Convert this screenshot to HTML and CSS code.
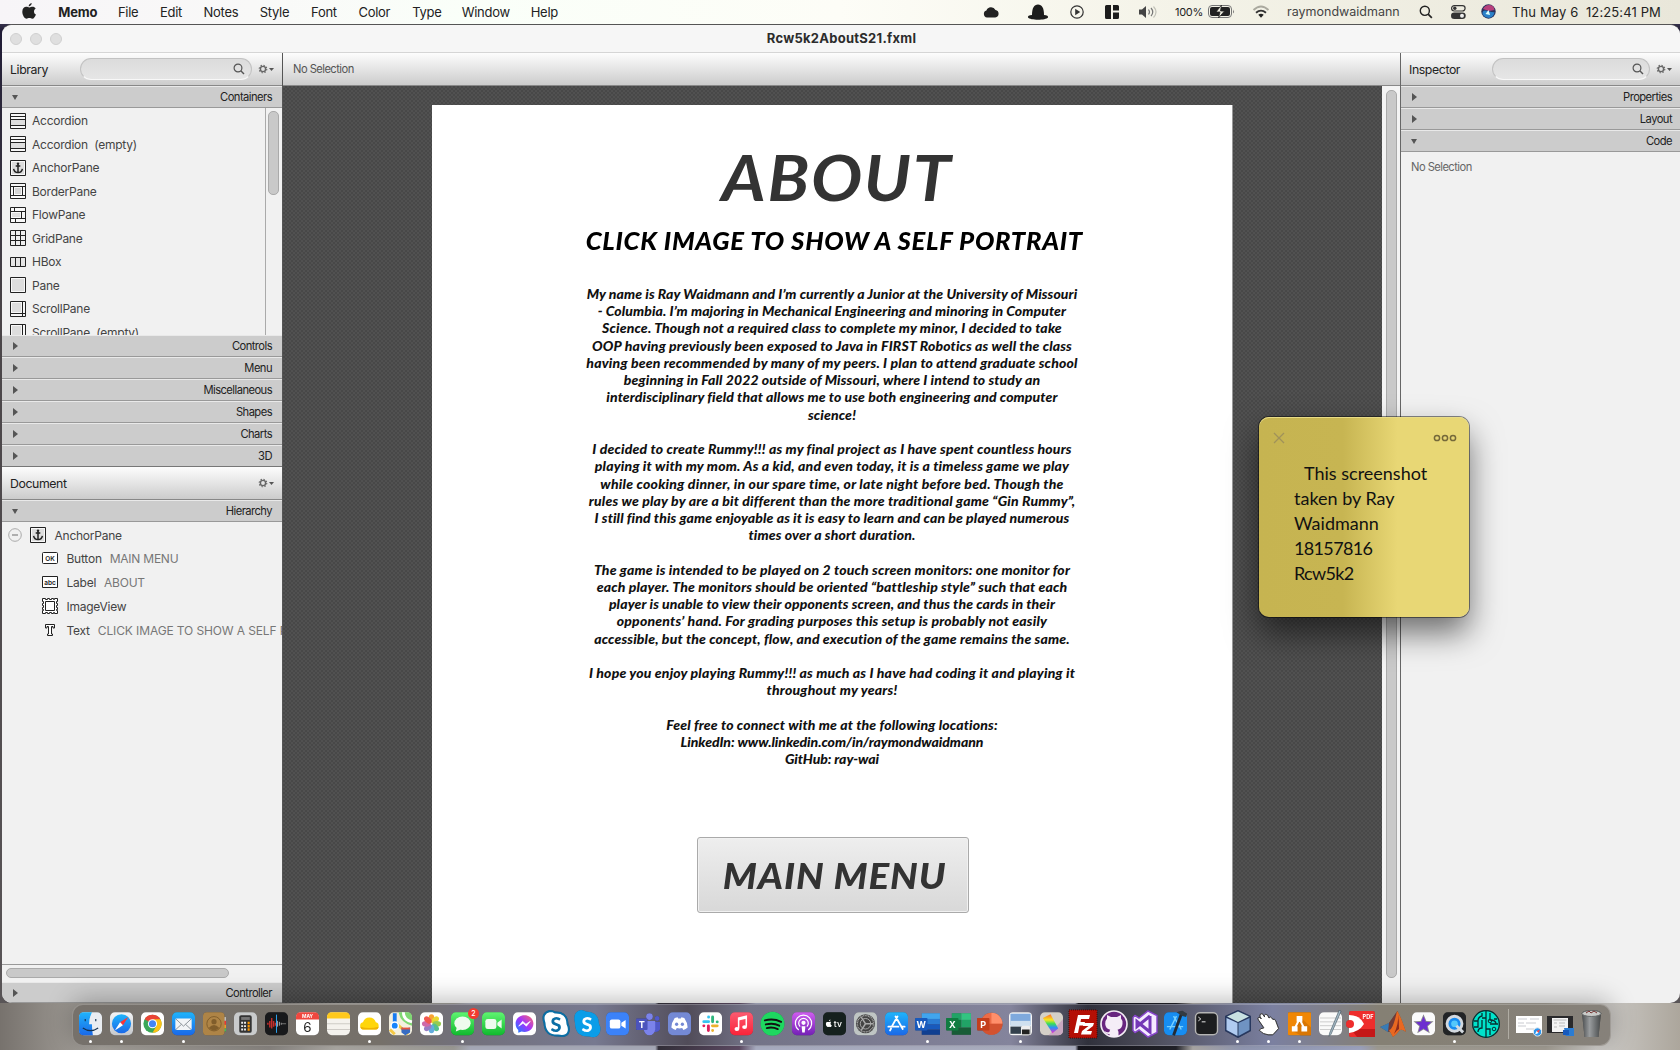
FILE: index.html
```html
<!DOCTYPE html>
<html lang="en">
<head>
<meta charset="utf-8">
<title>Rcw5k2AboutS21.fxml</title>
<link rel="stylesheet" href="styles.css">
</head>
<body>
<svg class="defs" width="0" height="0">
  <defs>
    <linearGradient id="blue" x2="0" y2="1"><stop offset="0" stop-color="#1fb4fb"/><stop offset="1" stop-color="#1a68e8"/></linearGradient>
    <linearGradient id="silver" x2="0" y2="1"><stop offset="0" stop-color="#f4f5f6"/><stop offset="1" stop-color="#c5c8cc"/></linearGradient>
    <linearGradient id="green" x2="0" y2="1"><stop offset="0" stop-color="#5ff571"/><stop offset="1" stop-color="#10b92e"/></linearGradient>
    <linearGradient id="pink" x2="0" y2="1"><stop offset="0" stop-color="#fc5b71"/><stop offset="1" stop-color="#fa2339"/></linearGradient>
    <linearGradient id="purple" x2="0" y2="1"><stop offset="0" stop-color="#cf5df0"/><stop offset="1" stop-color="#7320b5"/></linearGradient>
    <linearGradient id="messenger" x1="1" x2="0" y2="1"><stop offset="0" stop-color="#ff6a68"/><stop offset=".5" stop-color="#a033ff"/><stop offset="1" stop-color="#0a86ff"/></linearGradient>
    <linearGradient id="rainbow" x2="0" y2="1"><stop offset="0" stop-color="#ff6a2a"/><stop offset=".3" stop-color="#f7e71f"/><stop offset=".5" stop-color="#3ade59"/><stop offset=".7" stop-color="#2f8ef8"/><stop offset="1" stop-color="#ef2fc6"/></linearGradient>
    <linearGradient id="trash" x2="1" y2="0"><stop offset="0" stop-color="#4b4e50"/><stop offset=".4" stop-color="#999c9e"/><stop offset="1" stop-color="#454849"/></linearGradient>
  </defs>
  <symbol id="search" viewBox="0 0 12 12"><circle cx="5" cy="5" r="3.900" fill="none" stroke="currentColor" stroke-width="1.200"/><path d="M7.800 7.800 11 11" stroke="currentColor" stroke-width="1.400"/></symbol>
  <symbol id="gear" viewBox="0 0 16 10"><circle cx="5" cy="5" r="2.600" fill="none" stroke="#666" stroke-width="1.400"/><circle cx="5" cy="5" r="3.800" fill="none" stroke="#666" stroke-width="1.100" stroke-dasharray="1.400 1.580"/><path d="M11 4h5l-2.500 3z" fill="#555"/></symbol>
  <symbol id="anchor" viewBox="0 0 16 16"><path d="M.5.5h15v15H.5z" fill="#f8f8f8" stroke="#222"/><path d="M2 2h12v12H2z" fill="#ddd"/><path d="M8 3.200v9.500M5.700 6h4.600M3.600 8.800c.4 2.300 2 3.600 4.400 3.800 2.400-.2 4-1.500 4.400-3.800" fill="none" stroke="#222" stroke-width="1.500"/><circle cx="8" cy="3.600" r="1.200" fill="#222"/></symbol>
  <symbol id="accordion" viewBox="0 0 16 16"><path d="M.5.5h15v15H.5z" fill="#f8f8f8" stroke="#222"/><path d="M1 7h14v5H1z" fill="#ddd"/><path d="M0 3.500h16M0 6.500h16M0 12.500h16" stroke="#222"/></symbol>
  <symbol id="scroll" viewBox="0 0 16 16"><path d="M.5.5h15v15H.5z" fill="#f8f8f8" stroke="#222"/><path d="M2 2h9v9H2z" fill="#ddd"/><path d="M12.500 0v16M0 12.500h16" stroke="#222"/></symbol>
</svg>

<header class="menubar">
  <nav class="menus">
    <svg class="apple" viewBox="0 0 14 16"><path d="M9.700 0c.1 1.700-1.300 3.300-3 3.400C6.500 1.800 8 .2 9.700 0zM12 8.400c0-1.500.8-2.500 1.700-3C12.900 4.300 11.800 3.800 10.600 3.800c-1.300 0-2.200.7-3.200.7S5.400 3.800 4.300 3.800C2.200 3.800.3 5.600.3 8.700c0 3.200 2.200 7 4.200 7 1 0 1.700-.7 2.900-.7s1.700.7 2.900.7c1.600 0 3-2.500 3.600-4.300C12.700 11 12 9.900 12 8.400z" fill="#222"/></svg>
    <b>Memo</b><span>File</span><span>Edit</span><span>Notes</span><span>Style</span><span>Font</span><span>Color</span><span>Type</span><span>Window</span><span>Help</span>
  </nav>
  <div class="status">
    <svg width="16" height="12" viewBox="0 0 16 12"><path d="M4 11.500a3.600 3.600 0 0 1-.6-7A5 5 0 0 1 12.500 4a3.800 3.800 0 0 1-.2 7.500z" fill="#222"/></svg>
    <svg width="22" height="16" viewBox="0 0 22 16"><path d="M5 11C5 4 7 .5 11 .5S17 4 17 11c3 0 4.500 1 4 2.500-2 3-18 3-20 0C.5 12 2 11 5 11z" fill="#1c1c1c"/></svg>
    <svg width="14" height="14" viewBox="0 0 14 14"><circle cx="7" cy="7" r="6.200" fill="none" stroke="#333" stroke-width="1.200"/><path d="M5.200 3.800 10.200 7l-5 3.200z" fill="#333"/></svg>
    <svg width="15" height="14" viewBox="0 0 15 14"><path d="M1.500 0H6v14H1.500Q0 14 0 12.500v-11Q0 0 1.500 0zM8 0h4.500Q14 0 14 1.500V5.500H8zM8 7.500h6v5q0 1.500-1.500 1.500H8z" fill="#1c1c1c"/></svg>
    <svg width="20" height="14" viewBox="0 0 20 14"><path d="M0 4.500h3L7 1v12L3 9.500H0z" fill="#444"/><path d="M9.500 4.500q2 2.500 0 5M12 3q3.500 4 0 8" fill="none" stroke="#777" stroke-width="1.200"/><path d="M14.500 1.500q5 5.500 0 11" fill="none" stroke="#c2c2b8" stroke-width="1.200"/></svg>
    <span class="percent">100%</span>
    <svg width="27" height="13" viewBox="0 0 27 13"><rect x=".5" y=".5" width="23" height="12" rx="3.500" fill="none" stroke="#777"/><rect x="2" y="2" width="20" height="9" rx="2" fill="#222"/><path d="M25 4.500q1.800 2 0 4z" fill="#777"/><path d="M13.500 0 8 7h4l-1.500 6L16.500 6h-4z" fill="#f0efe2" stroke="#222" stroke-width=".8"/></svg>
    <svg width="18" height="13" viewBox="0 0 18 13"><path d="M1.500 5Q9-2 16.500 5" fill="none" stroke="#aaa99f" stroke-width="1.800"/><path d="M4 7.800q5-4.400 10 0" fill="none" stroke="#333" stroke-width="1.800"/><path d="M6.300 9.800q2.700-2.200 5.400 0L9 12.800z" fill="#222"/></svg>
    <span class="user">raymondwaidmann</span>
    <svg width="14" height="14" viewBox="0 0 12 12"><use href="#search"/></svg>
    <svg width="15" height="14" viewBox="0 0 15 14"><rect x=".6" y=".6" width="13.500" height="5.400" rx="2.700" fill="none" stroke="#333" stroke-width="1.200"/><circle cx="3.800" cy="3.300" r="1.700" fill="#333"/><rect y="7.400" width="14.700" height="6.600" rx="3.300" fill="#333"/><circle cx="11" cy="10.700" r="2" fill="#eee"/></svg>
    <svg width="15" height="15" viewBox="0 0 15 15"><circle cx="7.500" cy="7.500" r="7.200" fill="#28305c"/><path d="M2 5Q4 1 8 1q5 0 5.500 5L8 7z" fill="#b8407c"/><path d="M1.500 10Q1 5 7 7t6.500 1Q13 13 8 14q-5-.5-6.500-4z" fill="#2a80c8"/><path d="M4.500 10l3-4L9 11z" fill="#dff"/></svg>
    <span class="clock">Thu May 6&nbsp; 12:25:41 PM</span>
  </div>
</header>

<main class="window">
  <div class="titlebar"><div class="lights"><i></i><i></i><i></i></div><h1>Rcw5k2AboutS21.fxml</h1></div>
  <div class="panes">
    <aside class="sidebar">
      <div class="toolbar"><h2>Library</h2><div class="searchbox"><svg width="12" height="12"><use href="#search"/></svg></div><svg class="gear" width="16" height="10"><use href="#gear"/></svg></div>
      <div class="section open">Containers</div>
      <div class="library">
        <ul>
          <li><svg><use href="#accordion"/></svg>Accordion</li>
          <li><svg><use href="#accordion"/></svg>Accordion&nbsp; (empty)</li>
          <li><svg><use href="#anchor"/></svg>AnchorPane</li>
          <li><svg viewBox="0 0 16 16"><path d="M.5.5h15v15H.5z" fill="#f8f8f8" stroke="#222"/><path d="M5 5h6v6H5z" fill="#d4d4d4"/><path d="M0 3.500h16M0 12.500h16M3.500 3v10M12.500 3v10" stroke="#222"/></svg>BorderPane</li>
          <li><svg viewBox="0 0 16 16"><path d="M.5.5h15v15H.5z" fill="#f8f8f8" stroke="#222"/><path d="M2 6h8v4H2z" fill="#ddd"/><path d="M0 4.500h16M0 11.500h16M4.500 0v4M11.500 4v8M5.500 12v4" stroke="#222"/></svg>FlowPane</li>
          <li><svg viewBox="0 0 16 16"><path d="M.5.5h15v15H.5z" fill="#eee" stroke="#222"/><path d="M0 5.500h16M0 10.500h16M5.500 0v16M10.500 0v16" stroke="#222"/></svg>GridPane</li>
          <li><svg viewBox="0 0 16 16"><path d="M.5 3.500h15v9H.5z" fill="#e6e6e6" stroke="#222"/><path d="M5.500 3v10M10.500 3v10" stroke="#222"/></svg>HBox</li>
          <li><svg viewBox="0 0 16 16"><path d="M.5.5h15v15H.5z" fill="#f8f8f8" stroke="#222"/><path d="M2 2h12v12H2z" fill="#ddd"/></svg>Pane</li>
          <li><svg><use href="#scroll"/></svg>ScrollPane</li>
          <li><svg><use href="#scroll"/></svg>ScrollPane&nbsp; (empty)</li>
        </ul>
        <div class="vtrack"><i></i></div>
      </div>
      <div class="section">Controls</div>
      <div class="section">Menu</div>
      <div class="section">Miscellaneous</div>
      <div class="section">Shapes</div>
      <div class="section">Charts</div>
      <div class="section last">3D</div>
      <div class="toolbar document"><h2>Document</h2><svg class="gear" width="16" height="10"><use href="#gear"/></svg></div>
      <div class="section open">Hierarchy</div>
      <ul class="tree">
        <li class="root"><svg class="fold" viewBox="0 0 14 14"><circle cx="7" cy="7" r="6.300" fill="none" stroke="#aaa"/><path d="M4 7h6" stroke="#999" stroke-width="1.500"/></svg><svg><use href="#anchor"/></svg>AnchorPane</li>
        <li><svg viewBox="0 0 16 16"><rect x=".5" y="2.500" width="15" height="11" rx="1" fill="#fff" stroke="#222"/><text x="8" y="10.800" text-anchor="middle" class="ok">OK</text></svg>Button<em>MAIN MENU</em></li>
        <li><svg viewBox="0 0 16 16"><path d="M.5 2.500h15v11H.5z" fill="#fff" stroke="#222"/><text x="8" y="10.500" text-anchor="middle" class="ok">abc</text></svg>Label<em>ABOUT</em></li>
        <li><svg viewBox="0 0 16 16"><path d="M.5.5h3v1h2v-1h2v1h2v-1h2v1h1v-1h3v3h-1v2h1v2h-1v2h1v2h-1v1h1v3h-3v-1h-1v1h-2v-1h-2v1h-2v-1h-2v1h-3v-3h1v-1h-1v-2h1v-2h-1v-2h1v-2h-1z" fill="#fff" stroke="#222"/><path d="M3.500 3.500h9v9h-9z" fill="#fff" stroke="#222"/></svg>ImageView</li>
        <li><svg viewBox="0 0 16 16"><path d="M3.500 2.500h9v3.500h-1.500V4.500H9.500v7.500h1v1.500h-5V12h1V4.500H5V6H3.500z" fill="#fff" stroke="#222"/></svg>Text<em class="clip">CLICK IMAGE TO SHOW A SELF PORTRAIT</em></li>
      </ul>
      <div class="htrack"><i></i></div>
      <div class="section controller">Controller</div>
    </aside>

    <section class="editor">
      <div class="toolbar"><span>No Selection</span></div>
      <div class="workspace">
        <div class="stage">
          <article class="page">
            <h3 class="about">ABOUT</h3>
            <p class="click">CLICK IMAGE TO SHOW A SELF PORTRAIT</p>
            <div class="bio">
              <p class="snug">My name is Ray Waidmann and I’m currently a Junior at the University of Missouri</p>
              <p class="snug">- Columbia. I’m majoring in Mechanical Engineering and minoring in Computer</p>
              <p>Science. Though not a required class to complete my minor, I decided to take</p>
              <p>OOP having previously been exposed to Java in FIRST Robotics as well the class</p>
              <p class="wide">having been recommended by many of my peers. I plan to attend graduate school</p>
              <p class="tight">beginning in Fall 2022 outside of Missouri, where I intend to study an</p>
              <p class="tight">interdisciplinary field that allows me to use both engineering and computer</p>
              <p class="end">science!</p>
              <p class="wide">I decided to create Rummy!!! as my final project as I have spent countless hours</p>
              <p class="wide">playing it with my mom. As a kid, and even today, it is a timeless game we play</p>
              <p class="wider">while cooking dinner, in our spare time, or late night before bed. Though the</p>
              <p class="wide">rules we play by are a bit different than the more traditional game “Gin Rummy”,</p>
              <p class="tight">I still find this game enjoyable as it is easy to learn and can be played numerous</p>
              <p class="end">times over a short duration.</p>
              <p class="wide">The game is intended to be played on 2 touch screen monitors: one monitor for</p>
              <p>each player. The monitors should be oriented “battleship style” such that each</p>
              <p class="tight">player is unable to view their opponents screen, and thus the cards in their</p>
              <p class="wide">opponents’ hand. For grading purposes this setup is probably not easily</p>
              <p class="end">accessible, but the concept, flow, and execution of the game remains the same.</p>
              <p class="wide">I hope you enjoy playing Rummy!!! as much as I have had coding it and playing it</p>
              <p class="wider end">throughout my years!</p>
              <p>Feel free to connect with me at the following locations:</p>
              <p class="url">LinkedIn: www.linkedin.com/in/raymondwaidmann</p>
              <p class="url">GitHub: ray-wai</p>
            </div>
            <button class="mainmenu"><span>MAIN MENU</span></button>
          </article>
        </div>
        <div class="vtrack"><i></i></div>
      </div>
    </section>

    <aside class="inspector">
      <div class="toolbar"><h2>Inspector</h2><div class="searchbox"><svg width="12" height="12"><use href="#search"/></svg></div><svg class="gear" width="16" height="10"><use href="#gear"/></svg></div>
      <div class="section">Properties</div>
      <div class="section">Layout</div>
      <div class="section open">Code</div>
      <p class="empty">No Selection</p>
    </aside>
  </div>
</main>

<footer class="dock">
  <div class="app run"><svg viewBox="0 0 24 24"><rect width="24" height="24" rx="5" fill="#e9edf2"/><path d="M5 0h8.500q-3 6-3 12.500h3q0 6 1 11.500H5q-5 0-5-5V5q0-5 5-5z" fill="url(#blue)"/><path d="M6.500 7v2.500M17.500 7v2.500M4 16.500q8 5.500 16 0" fill="none" stroke="#15314f" stroke-width="1.200"/></svg></div>
  <div class="app run"><svg viewBox="0 0 24 24"><rect width="24" height="24" rx="5" fill="url(#silver)"/><circle cx="12" cy="12" r="10" fill="url(#blue)"/><path d="m19 5-8.500 5.500 3 3z" fill="#f33"/><path d="m5 19 5.500-8.500 3 3z" fill="#fff"/></svg></div>
  <div class="app"><svg viewBox="0 0 24 24"><rect width="24" height="24" rx="5" fill="#fff"/><circle cx="12" cy="12" r="9.500" fill="#3aa757"/><path d="M12 12 3.800 7.200A9.500 9.500 0 0 1 20.200 7.200z" fill="#ea4335"/><path d="M12 7.200h8.200A9.500 9.500 0 0 1 12 21.500l4.500-8z" fill="#fbc116"/><circle cx="12" cy="12" r="4.800" fill="#fff"/><circle cx="12" cy="12" r="3.700" fill="#4285f4"/></svg></div>
  <div class="app run"><svg viewBox="0 0 24 24"><rect width="24" height="24" rx="5" fill="url(#blue)"/><rect x="3.500" y="6.500" width="17" height="12" rx="1.500" fill="#f2f4f6"/><path d="m4 7 8 7.500L20 7M4 18l6-5.500M20 18l-6-5.500" fill="none" stroke="#8b9299"/></svg></div>
  <div class="app"><svg viewBox="0 0 24 24"><path d="M20 5h4v4h-4z" fill="#bbb"/><path d="M20 9h4v4h-4z" fill="#e33"/><path d="M20 13h4v4h-4z" fill="#e92"/><path d="M20 17h4v3h-4z" fill="#4b5"/><rect width="22.500" height="24" rx="4" fill="#ae8446"/><circle cx="11.500" cy="12" r="7.500" fill="none" stroke="#805d2b"/><circle cx="11.500" cy="9.800" r="2.700" fill="#805d2b"/><path d="M6 16.500q5.500-6.500 11 0-5.500 5-11 0z" fill="#805d2b"/></svg></div>
  <div class="app"><svg viewBox="0 0 24 24"><rect width="24" height="24" rx="5" fill="#c9cbcc"/><rect x="5.500" y="3" width="13" height="18.500" rx="2" fill="#333"/><path d="M7.500 5h9v3h-9z" fill="#777"/><path d="M7.500 11h5.500M7.500 14.500h5.500M7.500 18h5.500" stroke="#eee" stroke-width="2" stroke-dasharray="2 1"/><path d="M15.300 10v9.500" stroke="#f90" stroke-width="2.200" stroke-dasharray="2.400 1"/></svg></div>
  <div class="app"><svg viewBox="0 0 24 24"><rect width="24" height="24" rx="5" fill="#18191b"/><path d="M3 11v2M5 9v7M7 6v11M9 9v6M11 11v3" stroke="#c22d2b" stroke-width="1.500"/><path d="M13 9v6M15 10v4M17 11v2" stroke="#aaa"/><path d="M17 12h5" stroke="#777"/><path d="M12 2.500v19" stroke="#2aa5f5"/></svg></div>
  <div class="app"><svg viewBox="0 0 24 24"><rect width="24" height="24" rx="5" fill="#fff"/><path d="M5 0h14q5 0 5 5v2.500H0V5q0-5 5-5z" fill="#f0473e"/><text class="month" x="12" y="5.800">MAY</text><text class="day" x="12" y="20.500">6</text></svg></div>
  <div class="app"><svg viewBox="0 0 24 24"><rect width="24" height="24" rx="5" fill="#f4f2ed"/><path d="M5 0h14q5 0 5 5v1.500H0V5q0-5 5-5z" fill="#ffc91c"/><path d="M0 12h24M0 18h24" stroke="#ccc9c3"/></svg></div>
  <div class="app run"><svg viewBox="0 0 24 24"><rect width="24" height="24" rx="5" fill="#fff"/><path d="M6 18a3.800 3.800 0 0 1-.8-7.500 7 7 0 0 1 13.400 0A3.800 3.800 0 0 1 18 18z" fill="#ffd60a"/><path d="M2.500 15q9 3 19 0-.5 3-3.500 3H6q-3 0-3.500-3z" fill="#efb300"/></svg></div>
  <div class="app"><svg viewBox="0 0 24 24"><rect width="24" height="24" rx="5" fill="#f4f0df"/><path d="M10 0h9q5 0 5 5v9Q12 11 10 0z" fill="#7fd873"/><path d="M15 0q0 8 9 10" fill="none" stroke="#fff" stroke-width="3"/><path d="m8 12 12 11M1 18l5 5" stroke="#f5c944" stroke-width="3"/><path d="M6 1v14" stroke="#187bf2" stroke-width="4"/><circle cx="6" cy="14" r="3.800" fill="#1684fb" stroke="#fff" stroke-width="1.500"/><path d="m13 16 4 1 5-1v5l-5 3-4-3z" fill="#376cc3"/><path d="M13 16h9v2h-9z" fill="#e5533c"/></svg></div>
  <div class="app"><svg viewBox="0 0 24 24"><rect width="24" height="24" rx="5" fill="#fff"/><g opacity=".9"><ellipse cx="12" cy="6.500" rx="3" ry="4.500" fill="#f89a1c"/><ellipse cx="12" cy="6.500" rx="3" ry="4.500" fill="#e6d21c" transform="rotate(45 12 12)"/><ellipse cx="12" cy="6.500" rx="3" ry="4.500" fill="#8cc63f" transform="rotate(90 12 12)"/><ellipse cx="12" cy="6.500" rx="3" ry="4.500" fill="#43b982" transform="rotate(135 12 12)"/><ellipse cx="12" cy="6.500" rx="3" ry="4.500" fill="#53a4dc" transform="rotate(180 12 12)"/><ellipse cx="12" cy="6.500" rx="3" ry="4.500" fill="#8d70bd" transform="rotate(225 12 12)"/><ellipse cx="12" cy="6.500" rx="3" ry="4.500" fill="#ca5aa0" transform="rotate(270 12 12)"/><ellipse cx="12" cy="6.500" rx="3" ry="4.500" fill="#f0483e" transform="rotate(315 12 12)"/></g></svg></div>
  <div class="app run"><svg viewBox="0 0 24 24"><rect width="24" height="24" rx="5" fill="url(#green)"/><ellipse cx="12" cy="11.500" rx="8.500" ry="7" fill="#eefbee"/><path d="m6 16-1 4 5-2z" fill="#eefbee"/></svg><b class="badge">2</b></div>
  <div class="app"><svg viewBox="0 0 24 24"><rect width="24" height="24" rx="5" fill="url(#green)"/><rect x="3.500" y="7" width="11.500" height="10.500" rx="2.500" fill="#eefbee"/><path d="m16 11 4.500-3.500v9.500L16 13.500z" fill="#eefbee"/></svg></div>
  <div class="app"><svg viewBox="0 0 24 24"><rect width="24" height="24" rx="5" fill="#fff"/><path d="M12 3c5.500 0 9.300 4 9.300 8.800s-3.800 8.800-9.300 8.800q-2 0-3-.4L5.500 21.500v-3C3.700 17 2.700 14.500 2.700 11.800 2.700 7 6.500 3 12 3z" fill="url(#messenger)"/><path d="m6 14.500 4-5 3.500 3 4.500-3-4 5-3.500-3z" fill="#fff" stroke="#fff" stroke-width=".7"/></svg></div>
  <div class="app big"><svg viewBox="0 0 28 28"><path d="M8 1q3 0 5 1.500Q25 2 25.500 14 28 19 26 23t-10 2.500Q3 26 2.500 13-1 3 8 1z" fill="#fff" stroke="#0a6fa6" stroke-width="2"/><text class="skype business" x="14" y="21.500">S</text></svg></div>
  <div class="app big"><svg viewBox="0 0 28 28"><path d="M8 0q3 0 5 1.500Q26 2 26 14q3 5 0 10t-10 2.500Q2 27 2 13-1 2 8 0z" fill="#0a9de8"/><text class="skype" x="14" y="21.500">S</text></svg></div>
  <div class="app"><svg viewBox="0 0 24 24"><rect width="24" height="24" rx="5" fill="#3b82f9"/><rect x="4" y="7.500" width="11" height="9.500" rx="2" fill="#fff"/><path d="m16 11 4.500-3v9L16 14z" fill="#fff"/></svg></div>
  <div class="app"><svg viewBox="0 0 24 24"><circle cx="13" cy="4.500" r="3.500" fill="#7b83eb"/><circle cx="21" cy="6.500" r="2.500" fill="#5059c9"/><path d="M15 10h9v8q-3 4-7 2z" fill="#5059c9"/><path d="M7 9h12v9q-1 6-6 6t-6-6z" fill="#7b83eb"/><rect x="-1" y="6.500" width="12" height="12" rx="1" fill="#4b53bc"/><text class="letter" x="5" y="16">T</text></svg></div>
  <div class="app"><svg viewBox="0 0 24 24"><rect width="24" height="24" rx="5" fill="#7489d5"/><path d="m7 6 3-.7.7 1.300h2.600l.7-1.300L17 6q3.500 5 3.500 10-2 2-4.500 2.500l-1.200-2q-2.800 1-5.600 0l-1.200 2Q5.500 18 3.500 16 3.500 11 7 6z" fill="#fff"/><ellipse cx="9" cy="12.500" rx="1.700" ry="1.900" fill="#7489d5"/><ellipse cx="15" cy="12.500" rx="1.700" ry="1.900" fill="#7489d5"/></svg></div>
  <div class="app"><svg viewBox="0 0 24 24"><rect width="24" height="24" rx="5" fill="#fff"/><g stroke-width="3" stroke-linecap="round"><path d="M5 9.800h5M10 5v.1" stroke="#36c5f0"/><path d="M14.200 5v5M19 10v.1" stroke="#2eb67d"/><path d="M14 14.200h5M14.200 19v.1" stroke="#ecb22e"/><path d="M9.800 14.200V19M5 14.200h.1" stroke="#e01e5a"/></g></svg></div>
  <div class="app run"><svg viewBox="0 0 24 24"><rect width="24" height="24" rx="5" fill="url(#pink)"/><path d="M9 17V6l8-1.800V15" fill="none" stroke="#fff" stroke-width="1.600"/><path d="m9 6 8-1.800v2.600L9 8.500z" fill="#fff"/><ellipse cx="7.200" cy="17.500" rx="2.500" ry="2" fill="#fff"/><ellipse cx="15.200" cy="15.500" rx="2.500" ry="2" fill="#fff"/></svg></div>
  <div class="app"><svg viewBox="0 0 24 24"><circle cx="12" cy="12" r="12.500" fill="#1ed760"/><path d="M4 8.500q9-2.500 17 1.500M5 12.700q8-2 14 1.300M6 16.500q6-1.500 11.500 1" fill="none" stroke="#111" stroke-width="2" stroke-linecap="round"/></svg></div>
  <div class="app"><svg viewBox="0 0 24 24"><rect width="24" height="24" rx="5" fill="url(#purple)"/><path d="M7 18.500a8.500 8.500 0 1 1 10 0M8.500 15a5 5 0 1 1 7 0" fill="none" stroke="#fff" stroke-width="1.300"/><circle cx="12" cy="11" r="2.200" fill="#fff"/><path d="M10 14.500h4L13.300 21h-2.600z" fill="#fff"/></svg></div>
  <div class="app"><svg viewBox="0 0 24 24"><rect width="24" height="24" rx="5" fill="#15201e"/><path d="M8.500 10.200c-1-.6-1.700.1-2.300.1s-1.200-.5-2.200 0C2 11.500 3.500 15.500 5 15.500c.6 0 .8-.3 1.300-.3s.8.3 1.300.3c.7 0 1.300-1 1.600-1.800-1.600-.8-1.600-2.600-.7-3.500zM6.200 9.500q0-1.700 1.600-2 .1 1.700-1.600 2z" fill="#fff"/><text class="tv" x="15.500" y="15.500">tv</text></svg></div>
  <div class="app"><svg viewBox="0 0 24 24"><rect width="24" height="24" rx="5" fill="#bfc5c4"/><circle cx="12" cy="12" r="10" fill="#444"/><circle cx="12" cy="12" r="8.500" fill="none" stroke="#aaa" stroke-width="1.500" stroke-dasharray="1 .7"/><circle cx="12" cy="12" r="5.500" fill="none" stroke="#aaa"/><path d="M12 12h8M12 12 7.500 5M12 12 7.500 19" stroke="#aaa" stroke-width="1.500"/></svg></div>
  <div class="app"><svg viewBox="0 0 24 24"><rect width="24" height="24" rx="5" fill="url(#blue)"/><path d="m13 4.500-6 10.500M11 4.500l7.500 13M3.500 15h10.500M17 15h3.500M6.300 17l-1 2" stroke="#fff" stroke-width="1.900" stroke-linecap="round"/></svg></div>
  <div class="app run"><svg viewBox="0 0 24 24"><path d="M6 1h19v6H6z" fill="#41a5ee"/><path d="M6 7h19v5.500H6z" fill="#2b7cd3"/><path d="M6 12.500h19V18H6z" fill="#185abd"/><path d="M6 18h19v5.500H6z" fill="#103f91"/><rect x="-1" y="6" width="13" height="13" rx="1" fill="#185abd"/><text class="letter" x="5.500" y="16">W</text></svg></div>
  <div class="app"><svg viewBox="0 0 24 24"><path d="M5 1h10v7H5z" fill="#21a366"/><path d="M15 1h10v7H15z" fill="#33c481"/><path d="M5 8h10v8H5z" fill="#107c41"/><path d="M15 8h10v8H15z" fill="#21a366"/><path d="M5 16h20v7.500H5z" fill="#185c37"/><rect x="-1" y="6" width="13" height="13" rx="1" fill="#107c41"/><text class="letter" x="5.500" y="16">X</text></svg></div>
  <div class="app"><svg viewBox="0 0 24 24"><circle cx="14" cy="12" r="11.500" fill="#ed6c47"/><path d="M14 .5A11.500 11.500 0 0 1 25.500 12H14z" fill="#ff8f6b"/><path d="M2.500 12h23A11.500 11.500 0 0 1 2.500 12z" fill="#d35230"/><rect x="-1" y="6" width="13" height="13" rx="1" fill="#c43e1c"/><text class="letter" x="5.500" y="16">P</text></svg></div>
  <div class="app run"><svg viewBox="0 0 24 24"><rect width="24" height="24" rx="4" fill="#f5f5f5"/><path d="M1.500 1.500h21v12h-21z" fill="#7ea9dd"/><path d="M1.500 9h21v6h-21z" fill="#cfe0ef"/><path d="M1.500 15h21v7.500h-21z" fill="#33404c"/><rect x="12.500" y="14" width="10" height="10" rx="2" fill="#eee"/><path d="M13.500 18h8v5h-8z" fill="#222"/></svg></div>
  <div class="app"><svg viewBox="0 0 24 24"><rect width="24" height="24" rx="5" fill="#d5d0c8"/><path d="M24 7v12q0 5-5 5H9z" fill="#c9a8c0"/><path d="m3 6 8-4 8 15-6 5z" fill="url(#rainbow)"/></svg></div>
  <div class="app big"><svg viewBox="0 0 28 28"><path d="M0 0h28v28H0z" fill="#b40f05" stroke="#5d0703" stroke-dasharray="1 1"/><path d="M9 5h12l-1 4H12l-.5 3H16l-1 3.500h-4.500L9 23H5zM15 13h10l-1 3-6.500 5H23l-1 3.500H12l1-3.500 6.500-5H14z" fill="#fff"/></svg></div>
  <div class="app big"><svg viewBox="0 0 28 28"><circle cx="14" cy="14" r="13" fill="#68267f" stroke="#f1eaf3" stroke-width="1.700"/><path d="M7 8.500V5l4 2h6l4-2v3.500q2 2 1.500 5.500-.5 5-5 5.700 1 1.300 1 2.500V27h-9v-3q-4 .5-5-3 3 2 5 .7 0-1 .7-2-4.500-.7-5-5.700Q5 10.500 7 8.500z" fill="#f5edf7"/></svg></div>
  <div class="app big"><svg viewBox="0 0 28 28"><path d="m17 1 9 4.500v17L17 27l-9-7-4 2.500-2-2V7.500l2-2L8 8z" fill="#f5eaff" stroke="#8948cb" stroke-width="1.500"/><path d="M19 6v16L6 11.500v5L19 6" fill="none" stroke="#7437b7" stroke-width="3"/></svg></div>
  <div class="app"><svg viewBox="0 0 24 24"><rect width="24" height="24" rx="5" fill="#178df1"/><path d="m13 4-7 14M10 4l8 14M3 15h17" stroke="#78d1ff" stroke-width="1.500"/><path d="m18 2-8 22" stroke="#222b35" stroke-width="3"/><path d="m13 0 6-1.500 5 3L23 5l-4-1z" fill="#333a42"/></svg></div>
  <div class="app"><svg viewBox="0 0 24 24"><rect x=".5" y=".5" width="23" height="23" rx="4.500" fill="#1c1d1f" stroke="#b5b5b5" stroke-width="1.500"/><path d="m3.500 5 2.500 2-2.500 2M7 10h4" fill="none" stroke="#eee"/></svg></div>
  <div class="app big run"><svg viewBox="0 0 28 28"><path d="m14 0 13 6v15l-13 7L1 21V6z" fill="#27385f"/><path d="m14 1.500 11 5L14 12 3 6.500z" fill="#c8e1e1"/><path d="m2.500 8 11 5v13l-11-6z" fill="#b0cbf0"/><path d="m25.500 8-11 5v13l11-6z" fill="#6f93c2"/></svg></div>
  <div class="app run"><svg viewBox="0 0 24 24"><path d="M7 16 1.500 8Q0 5 3 5.500l1.500 1.500L3 4q0-3 2.500-2.500L8 5 7.500 3.500q1.500-2.500 3.500-.5l1.500 3q1.500-2 3 0l1 1.500q2-1 3 1.500l3 8-6 6.500h-5q-5-.5-9-4.500.5-2.500 4.500-2.500z" fill="#fff" stroke="#333"/></svg></div>
  <div class="app run"><svg viewBox="0 0 24 24"><rect width="24" height="24" rx="1" fill="#f08705"/><path d="m14 6 10 10v8H13L4 19z" fill="#d87604"/><path d="m12 7-5 10M12 7l5 10" stroke="#fff" stroke-width="2"/><path d="M9 4h6v6H9zM4 14.500h6v5.500H4zM14 14.500h6v5.500h-6z" fill="#fff"/></svg></div>
  <div class="app"><svg viewBox="0 0 24 24"><rect width="24" height="24" rx="5" fill="#fafafa"/><path d="M1 6h22M1 10h22M1 14h22M1 18h22" stroke="#ccc"/><path d="M21-2 11 22l-.5 3 2-2L23-1z" fill="#a5bac6" stroke="#5b6c78" stroke-width=".8"/></svg></div>
  <div class="app wide"><svg viewBox="0 0 26 26"><rect width="26" height="26" rx="2" fill="#ee2d2c"/><path d="M2 18h24v8H8z" fill="#c51718"/><path d="M0 4q11 0 15 9-5 8-15 9" fill="#fff"/><circle cx="1" cy="13" r="4" fill="#ee2d2c"/><text class="pdf" x="19" y="8">PDF</text></svg></div>
  <div class="app wide"><svg viewBox="0 0 26 26"><path d="m0 16 9-4 4 5-5 4z" fill="#397bb5"/><path d="m9 12 7-10 2-2-5 19-5 2z" fill="#713b38"/><path d="M17 0q3 3 9 21-5-4-7-1t-6 6l-4-7q4 0 8-19z" fill="#e96821"/><path d="M18 3q1 9-4 20 3-4 5-5 0-9-1-15z" fill="#8e2b1d"/></svg></div>
  <div class="app"><svg viewBox="0 0 24 24"><rect width="24" height="24" rx="5" fill="#fbfbfb"/><path d="m12 2 3 7 7.500.5-6 5 2 7.500-6.500-4-6.500 4 2-7.500-6-5L9 9z" fill="#8b8992"/><path d="m12 4.500 2.300 5.500 5.700.5-4.500 3.800 1.500 5.700-5-3-5 3 1.500-5.700L4 10.500l5.700-.5z" fill="#6d2fd0"/></svg></div>
  <div class="app run"><svg viewBox="0 0 24 24"><rect width="24" height="24" rx="5" fill="#222426"/><circle cx="12" cy="12" r="7.800" fill="#168bf0" stroke="#d3d9df" stroke-width="3"/><circle cx="12" cy="12" r="3.500" fill="#54c8fb"/><path d="m14 14 7 7" stroke="#d3d9df" stroke-width="3"/></svg></div>
  <div class="app big"><svg viewBox="0 0 28 28"><circle cx="14" cy="14" r="13.300" fill="#00e3cb" stroke="#072f31" stroke-width="1.300"/><path d="M14 1v26M2 11h4q0-4 4-5V3M6 11v6H2M10 10v8q-4 0-4 4M14 8h-4M18 3v7q6 0 6 4M18 14h8M14 19h4v6M22 9h3" fill="none" stroke="#072f31" stroke-width="1.300"/><circle cx="22" cy="19" r="1.800" fill="none" stroke="#072f31"/><circle cx="18" cy="11" r="1.800" fill="none" stroke="#072f31"/></svg></div>
  <i class="divider"></i>
  <div class="app mini"><svg viewBox="0 0 28 24"><path d="M1 4h26v17H1z" fill="#fff"/><path d="M3 7h9M15 7h9M3 11h6M11 11h10M3 14h8M11 17h8" stroke="#c9cbd0"/><circle cx="22.500" cy="20" r="4.200" fill="#2d98ef" stroke="#eee"/><path d="m25 17.500-3.500 1.500 2 2z" fill="#f44"/><path d="m20 22.500 1.500-3.500 2 2z" fill="#fff"/></svg></div>
  <div class="app mini"><svg viewBox="0 0 28 24"><path d="M1 4h26v17H1z" fill="#29292b"/><path d="M6 6h16v14H6z" fill="#f4f4f4"/><path d="M7.500 8h13M8 11h3M8 15h3M13 11h6M13 14h6" stroke="#bbb"/><path d="M18 16h10v8H20z" fill="#2b7cd3"/><path d="M17 18h6v5h-6z" fill="#185abd"/></svg></div>
  <div class="app wide"><svg viewBox="0 0 26 26"><path d="M4 2h19l-2.500 24h-14z" fill="url(#trash)"/><ellipse cx="13.500" cy="2.500" rx="9.500" ry="3" fill="#c9cac8" stroke="#66696a"/><path d="m8 2 3-2 2 2 3-2 3 2" fill="none" stroke="#733"/></svg></div>
</footer>

<section class="note">
  <div class="notebar"><svg width="12" height="12" viewBox="0 0 12 12"><path d="m1 1 10 10M11 1 1 11" stroke="#a0925a" stroke-width="1.300"/></svg><svg width="24" height="8" viewBox="0 0 24 8"><g fill="none" stroke="#75693a" stroke-width="1.500"><circle cx="4" cy="4" r="2.600"/><circle cx="12" cy="4" r="2.600"/><circle cx="20" cy="4" r="2.600"/></g></svg></div>
  <p class="indent">This screenshot</p><p>taken by Ray</p><p>Waidmann</p><p class="num">18157816</p><p class="num">Rcw5k2</p>
</section>
</body>
</html>
```
FILE: styles.css
```css
* { box-sizing: border-box; margin: 0; padding: 0; }
body {
  width: 1680px; height: 1050px; overflow: hidden; position: relative;
  font-family: Inter, "Liberation Sans", sans-serif; font-size: 12px; color: #333;
  background:
    linear-gradient(90deg, #77726d, #aaa6a0 6%, #8f8b87 16%, #b5b2ad 20%, #a5a49f 27%, #b4b7c6 28%, #b4b7c6 39%, #37333e 39.2%, #64506a 44%, #b5b9cf 45%, #b8bbcd 64%, #17171f 64.2%, #24242c 70%, #b5b2b0 71%, #9ba2be 74%, #a8aecb 81%, #aaa69d 82%, #a8a399 92%, #cfcdca 95%, #aca69c) 0 1003px / 100% 47px no-repeat,
    linear-gradient(#77758f, #201c35 3%, #4a4548 30%, #5a5658);
}
ul { list-style: none; }
em { font-style: normal; }
svg { display: block; overflow: visible; flex: none; }
.defs { position: absolute; }

/* menu bar */
.menubar {
  height: 24px; display: flex; justify-content: space-between; padding: 0 18px 0 22px;
  background: linear-gradient(90deg, #f7f5f8, #f9f9f8 15%, #fafff9 28%, #fdfdf7 50%, #f4f3e8 70%, #e9e7da);
  color: #222; font-size: 13px;
}
.menus, .status { display: grid; align-items: center; height: 23px; white-space: pre; }
.menus { grid-template-columns: 36.3px 59.7px 42px 43.6px 56.2px 51.3px 47.5px 53.7px 49.5px 69px 40px; letter-spacing: -.3px; }
.menus b { letter-spacing: -.2px; }
.apple { width: 14px; height: 16px; margin-top: -2px; }
.status { grid-template-columns: 44px 43px 35px 34px 36px 33px 44px 35px 132px 32px 30px 31px 150px; }
.percent { font-size: 11px; letter-spacing: -.3px; }
.user { font-size: 12.5px; color: #444; }
.clock { letter-spacing: .12px; }

/* window frame */
.window {
  height: 979px; margin-left: 2px; display: flex; flex-direction: column; overflow: hidden;
  border-radius: 10px; background: #f1f1f1; border-top: 1px solid #555;
}
.titlebar { height: 28px; background: #f6f6f6; border-bottom: 1px solid #d5d5d5; display: grid; grid-template-columns: 1fr auto 1fr; align-items: center; padding-left: 8px; padding-right: 7px; }
.titlebar h1 { font-size: 13px; letter-spacing: .26px; line-height: 1; color: #2c2c2c; }
.lights { display: flex; gap: 8px; }
.lights i { width: 12px; height: 12px; border-radius: 50%; background: #dfdfdf; border: 1px solid #cfcfcf; }
.panes { flex: 1; display: grid; grid-template-columns: 281px 1117px 280px; min-height: 0; }
.toolbar {
  height: 33px; display: flex; align-items: center; flex: none; padding: 0 9px 0 8px;
  background: linear-gradient(#fdfdfd, #ccc); border-bottom: 1px solid #888;
}
.toolbar h2 { font-size: 12.3px; font-weight: 400; letter-spacing: -.4px; color: #222; }
.searchbox { height: 22px; border-radius: 11px; background: linear-gradient(#dcdcdc, #e6e6e6); border: 1px solid #c2c2c2; border-bottom-color: #f8f8f8; margin-left: auto; display: flex; justify-content: flex-end; align-items: center; padding-right: 6px; color: #555; }
.sidebar .searchbox { width: 172px; }
.inspector .searchbox { width: 158px; }
.gear { margin-left: 6px; }
.document .gear { margin-left: auto; }
.section {
  height: 22px; flex: none; display: flex; align-items: center; justify-content: space-between; padding: 0 10px 0 11px;
  background: #ccc; border-top: 1px solid #e9e9e9; border-bottom: 1px solid #999; font-size: 11.2px; letter-spacing: -.55px; color: #222;
}
.section::before { content: ""; border: 4px solid transparent; border-left: 5px solid #555; border-right: 0; }
.section.open::before { border: 3.5px solid transparent; border-top: 5px solid #555; border-bottom: 0; margin-left: -1px; }
.section.last { border-bottom-color: #777; }

/* library and document panels */
.sidebar, .inspector, .editor { display: flex; flex-direction: column; min-width: 0; min-height: 0; }
.sidebar { border-right: 1px solid #555; }
.sidebar .toolbar { padding-right: 8px; }
.library { height: 227px; flex: none; display: flex; overflow: hidden; }
.library ul { flex: 1; padding-top: 1px; }
li { display: flex; align-items: center; letter-spacing: -.24px; white-space: nowrap; color: #444; }
li svg { width: 16px; height: 16px; margin-right: 6px; }
.library li { height: 23.5px; padding-left: 8px; }
.library .vtrack { width: 17px; padding: 3px 3px 3px 2px; border-left: 1px solid #aaa; }
.library .vtrack i { height: 84px; }
.vtrack i { display: block; border: 1px solid #aaa; border-radius: 5px; background: #c9c9c9; }
.sidebar .document { height: 33px; }
.tree { flex: 1; min-height: 0; overflow: hidden; padding-top: 2px; }
.tree li { height: 24px; padding-left: 40px; }
.tree li svg { margin-right: 8.5px; }
.tree .root { height: 22px; padding-left: 6px; }
.tree .root .fold { width: 14px; height: 14px; margin-right: 8px; }
.tree em { margin-left: 8px; color: #777; }
.tree em.clip { letter-spacing: -.12px; }
.ok { font: 600 6.5px Inter, sans-serif; fill: #222; letter-spacing: 0; }
.htrack { height: 18px; flex: none; border-top: 1px solid #999; padding: 3px 4px; }
.htrack i { display: block; width: 223px; height: 10px; border: 1px solid #aaa; border-radius: 5px; background: #c9c9c9; }
.controller { height: 21px; }

/* editor */
.editor .toolbar { font-size: 11.2px; letter-spacing: -.55px; color: #555; padding-left: 10px; }
.workspace { flex: 1; display: flex; min-height: 0; }
.stage { flex: 1; display: flex; justify-content: center; padding-top: 19px; background: repeating-conic-gradient(#484848 0 25%, #515151 0 50%) 0 0 / 4px 4px; }
.page { width: 801px; background: #fff; display: flex; flex-direction: column; align-items: center; font-family: Lato, sans-serif; font-style: italic; font-weight: 900; white-space: nowrap; border-right: 1px solid #999; }
.editor .vtrack { width: 18px; padding: 4px 3px 0 4px; background: #f4f4f4; }
.editor .vtrack i { height: 888px; }
.about { font-size: 63px; line-height: 76px; margin-top: 34px; letter-spacing: 1.6px; color: #333; transform: scaleX(1.08); margin-left: 10px; }
.click { font-size: 24px; line-height: 30px; margin-top: 11px; letter-spacing: .65px; color: #000; transform: scaleX(1.07); margin-left: 5px; }
.bio { margin-top: 29px; text-align: center; font-size: 14px; line-height: 17.24px; letter-spacing: .16px; color: #111; }
.bio .snug { letter-spacing: .1px; }
.bio .tight { letter-spacing: .125px; }
.bio .wide { letter-spacing: .185px; }
.bio .wider { letter-spacing: .24px; }
.bio .url { letter-spacing: -.05px; }
.bio .end { margin-bottom: 17.24px; }
.mainmenu { width: 272px; height: 76px; margin-top: 69px; flex: none; margin-left: 2px; border: 1px solid #aaa; border-radius: 3px; background: linear-gradient(#eee, #d8d8d8); box-shadow: inset 0 0 0 1px #f1f1f1; font: inherit; font-size: 36px; letter-spacing: .8px; color: #333; }
.mainmenu span { display: block; transform: scaleX(1.07); margin-left: 3px; }

/* inspector */
.inspector { border-left: 1px solid #666; }
.inspector .toolbar { padding-right: 8px; }
.inspector .section { padding-right: 8px; }
.inspector .searchbox { padding-right: 5px; }
.empty { padding: 8px 10px; font-size: 11.2px; letter-spacing: -.55px; line-height: 14px; color: #666; }

/* sticky note floating over the desktop */
.note {
  position: absolute; left: 1259px; top: 417px; width: 210px; height: 200px; padding: 15px 12px 0 14px; border-radius: 10px;
  background: linear-gradient(90deg, #c6b451, #c7b552 40%, #e8d775 66%); color: #111;
  box-shadow: 0 0 0 1px rgba(0,0,0,.45), inset 0 1px #e9dc85, 0 16px 32px rgba(0,0,0,.55);
  font: 18px/24.9px Lato, sans-serif;
}
.notebar { display: flex; justify-content: space-between; align-items: center; height: 12px; margin-bottom: 17px; }
.note p { padding-left: 21px; white-space: nowrap; }
.note .indent { padding-left: 31px; }
.note .num { letter-spacing: -.65px; }

/* dock */
.dock {
  position: relative; display: flex; width: 1539px; height: 42px; margin: 1px 0 0 72px; padding: 1px 0 0 3px; border-radius: 11px;
  background: linear-gradient(90deg, #76716b, #757069 20%, #72707a 25%, #777990 34%, #514c59 40%, #737387 44%, #84849c 61%, #30313c 66%, #4c4c5a 70%, #7b80a0 78%, #858074 85%, #86817a);
  box-shadow: inset 0 0 0 1px rgba(255,255,255,.22), 0 -4px 26px rgba(0,0,0,.28);
}
.app { position: relative; width: 31px; height: 38px; display: flex; align-items: center; justify-content: center; flex: none; }
.app svg { width: 23px; height: 23.5px; margin-bottom: 1px; filter: drop-shadow(0 .5px .5px rgba(0,0,0,.35)); }
.app.big svg { width: 28px; height: 28px; }
.app.wide svg { width: 26px; height: 26px; }
.app.mini svg { width: 28px; height: 24px; }
.app.run::after { content: ""; position: absolute; left: 14px; bottom: 0; width: 3px; height: 3px; border-radius: 50%; background: #fff; }
.badge { position: absolute; right: -1px; top: 3px; width: 11px; height: 11px; border-radius: 50%; background: #f23b30; color: #fff; font-size: 7px; line-height: 11px; text-align: center; font-weight: 500; }
.divider { width: 1px; height: 30px; margin: 4px 4px 0 7px; background: #b0aca3; }
.month, .day, .skype, .letter, .tv, .pdf { font-family: Inter, sans-serif; text-anchor: middle; fill: #fff; }
.month { font-size: 5px; font-weight: 700; }
.day { font-size: 14px; fill: #222; }
.skype { font-family: Lato, sans-serif; font-size: 20px; font-weight: 900; }
.skype.business { fill: #0a6fa6; }
.letter { font-size: 9.5px; font-weight: 700; }
.tv { font-size: 9px; font-weight: 500; }
.pdf { font-size: 5.5px; font-weight: 700; }
```
